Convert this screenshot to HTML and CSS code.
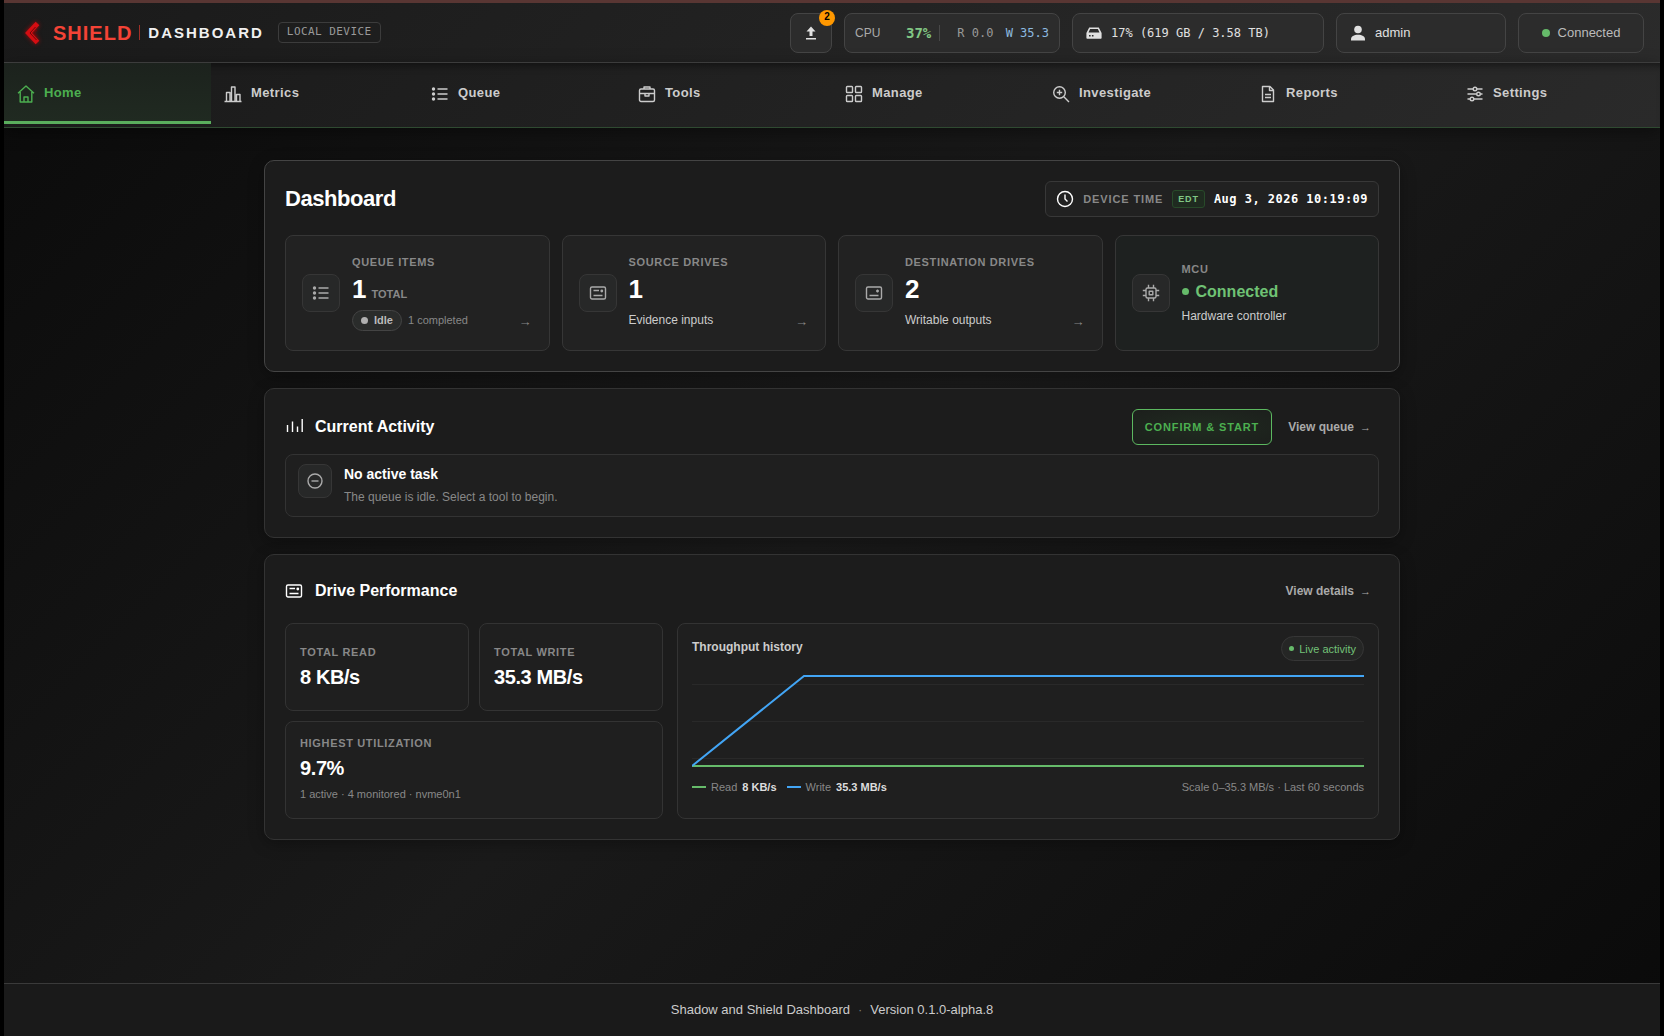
FILE: index.html
```html
<!DOCTYPE html>
<html lang="en">
<head>
<meta charset="utf-8">
<meta name="viewport" content="width=device-width, initial-scale=1">
<title>Shadow and Shield Dashboard</title>
<link rel="stylesheet" href="styles.css">
</head>
<body>
<svg class="sprite" aria-hidden="true">
  <symbol id="i-list" viewBox="0 0 18 18"><path d="M6.5 4h10M6.5 9h10M6.5 14h10"/><g fill="currentColor" stroke="none"><circle cx="2.500" cy="4" r="1.700"/><circle cx="2.500" cy="9" r="1.700"/><circle cx="2.500" cy="14" r="1.700"/></g></symbol>
  <symbol id="i-source" viewBox="0 0 18 18"><rect x="1.500" y="3" width="15" height="12" rx="1.500"/><path d="M4.500 6.500h5.500M4.500 11.500h9"/><circle cx="12.800" cy="7" r="1.400" fill="currentColor" stroke="none"/></symbol>
  <symbol id="i-dest" viewBox="0 0 18 18"><rect x="1.500" y="3" width="15" height="12" rx="1.500"/><path d="M4.500 11.500h9M12.500 5.500v3M11 7h3"/></symbol>
</svg>
<div class="app">
  <header class="topbar">
    <div class="brand">
      <svg class="logo" viewBox="0 0 20 28" aria-hidden="true"><path d="M15.500 4.500 6.500 14l9 9.500" fill="none" stroke="#d50d12" stroke-width="5"/><path d="M13.500 8 8 14l6.500 7M15 11l-3 3 3 3.500" fill="none" stroke="#6d0508" stroke-width="1"/></svg>
      <span class="brand-name">SHIELD</span>
      <span class="brand-rule"></span>
      <span class="brand-sub">DASHBOARD</span>
      <span class="tag">LOCAL DEVICE</span>
    </div>
    <div class="tools">
      <button class="chip chip-upload" type="button" aria-label="Uploads">
        <svg class="ico16" viewBox="0 0 16 16" aria-hidden="true"><path d="M8 1.500 12.500 6.500h-3V11h-3V6.500h-3zM3 13h10v1.500H3z" fill="currentColor"/></svg>
        <span class="count">2</span>
      </button>
      <div class="chip chip-cpu">
        <span class="cpu-label">CPU</span><span class="cpu-value">37%</span><span class="cpu-rule"></span>
        <span class="cpu-read">R 0.0</span><span class="cpu-write">W 35.3</span>
      </div>
      <div class="chip chip-disk">
        <svg class="ico16" viewBox="0 0 16 16" aria-hidden="true"><path fill="currentColor" fill-rule="evenodd" d="M3.200 2.500h9.600L15.600 8v5q0 .8-.8.8H1.200q-.8 0-.8-.8V8zM4.100 4 2.500 7.500h11L11.900 4zM3 9.900v1.700h1.600V9.900zm2.900 0v1.700h1.600V9.900z"/></svg>
        <span>17% (619 GB / 3.58 TB)</span>
      </div>
      <button class="chip chip-user" type="button">
        <svg class="ico16" viewBox="0 0 16 16" aria-hidden="true"><g fill="currentColor"><circle cx="8" cy="4.500" r="3.800"/><path d="M1 15.500v-1.300C1 11.500 4 9.800 8 9.800s7 1.700 7 4.400v1.300z"/></g></svg>
        <span>admin</span>
      </button>
      <div class="chip chip-status"><span class="dot dot-8"></span><span>Connected</span></div>
    </div>
  </header>

  <nav class="nav" aria-label="Main">
    <a class="nav-item active" href="#"><svg class="line" viewBox="0 0 18 18"><path d="M1 8.200 9 1l8 7.200M3.200 7v10h11.600V7M7 17v-5h4v5"/></svg><span>Home</span></a>
    <a class="nav-item" href="#"><svg class="line" viewBox="0 0 18 18"><path d="M.500 16.500h17M2.500 16V7.500h3.500V16M7.500 16V2H11v14M12.500 16V9.500H16V16"/></svg><span>Metrics</span></a>
    <a class="nav-item" href="#"><svg class="line"><use href="#i-list"/></svg><span>Queue</span></a>
    <a class="nav-item" href="#"><svg class="line" viewBox="0 0 18 18"><rect x="1.500" y="4" width="15" height="12.500" rx="1.500"/><path d="M6 4V2h6v2M1.500 8.500h15M7 8.500h4V11H7z"/></svg><span>Tools</span></a>
    <a class="nav-item" href="#"><svg class="line" viewBox="0 0 18 18"><rect x="1.500" y="1.500" width="6" height="6" rx=".8"/><rect x="10.500" y="1.500" width="6" height="6" rx=".8"/><rect x="1.500" y="10.500" width="6" height="6" rx=".8"/><rect x="10.500" y="10.500" width="6" height="6" rx=".8"/></svg><span>Manage</span></a>
    <a class="nav-item" href="#"><svg class="line" viewBox="0 0 18 18"><circle cx="7.500" cy="7.500" r="5.800"/><path d="m11.800 11.800 5.200 5.200M7.500 4.800v5.400M4.800 7.500h5.400"/></svg><span>Investigate</span></a>
    <a class="nav-item" href="#"><svg class="line" viewBox="0 0 18 18"><path d="M3.500 1.500h7.500l3.500 3.500v11.500h-11zM10.500 1.500V5.500h4M6 9.500h6M6 12.500h6"/></svg><span>Reports</span></a>
    <a class="nav-item" href="#"><svg class="line" viewBox="0 0 18 18"><path d="M1.500 4h5.500M11 4h5.500M1.500 9H10.500M14.500 9h2M1.500 14H4M8 14h8.500"/><circle cx="9" cy="4" r="1.800"/><circle cx="12.500" cy="9" r="1.800"/><circle cx="6" cy="14" r="1.800"/></svg><span>Settings</span></a>
  </nav>

  <main class="main">
    <section class="panel panel-top">
      <div class="panel-head">
        <h1>Dashboard</h1>
        <div class="clock">
          <svg class="line" viewBox="0 0 18 18"><circle cx="9" cy="9" r="7.500"/><path d="M9 4.500V9l2.500 2.500"/></svg>
          <span class="label label-wide">DEVICE TIME</span>
          <span class="zone">EDT</span>
          <time datetime="2026-08-03T10:19:09">Aug 3, 2026 10:19:09</time>
        </div>
      </div>
      <div class="stats">
        <a class="stat" href="#">
          <span class="tile"><svg class="line"><use href="#i-list"/></svg></span>
          <span class="stat-body">
            <span class="label">QUEUE ITEMS</span>
            <span class="big">1<small>TOTAL</small></span>
            <span class="stat-foot"><span class="pill"><span class="dot dot-grey"></span>Idle</span><span class="muted">1 completed</span><span class="arrow">→</span></span>
          </span>
        </a>
        <a class="stat" href="#">
          <span class="tile"><svg class="line"><use href="#i-source"/></svg></span>
          <span class="stat-body">
            <span class="label">SOURCE DRIVES</span>
            <span class="big">1</span>
            <span class="stat-foot">Evidence inputs<span class="arrow">→</span></span>
          </span>
        </a>
        <a class="stat" href="#">
          <span class="tile"><svg class="line"><use href="#i-dest"/></svg></span>
          <span class="stat-body">
            <span class="label">DESTINATION DRIVES</span>
            <span class="big">2</span>
            <span class="stat-foot">Writable outputs<span class="arrow">→</span></span>
          </span>
        </a>
        <div class="stat stat-ok">
          <span class="tile"><svg class="line" viewBox="0 0 18 18"><rect x="4" y="4" width="10" height="10" rx="1.500"/><rect x="7.200" y="7.200" width="3.600" height="3.600"/><path d="M6.500 4V.800M11.500 4V.800M6.500 17.200V14M11.500 17.200V14M.800 6.500H4M.800 11.500H4M14 6.500h3.200M14 11.500h3.200"/></svg></span>
          <span class="stat-body">
            <span class="label">MCU</span>
            <span class="state"><span class="dot"></span>Connected</span>
            <span class="state-note">Hardware controller</span>
          </span>
        </div>
      </div>
    </section>

    <section class="panel">
      <div class="panel-head head-activity">
        <h2><svg class="line" viewBox="0 0 18 18"><path d="M2.500 14V7M7.500 14V3.500M12.500 14V8.500M17.200 14V1"/></svg>Current Activity</h2>
        <div class="actions">
          <button class="confirm" type="button">CONFIRM &amp; START</button>
          <a class="more" href="#">View queue <span>→</span></a>
        </div>
      </div>
      <div class="task">
        <span class="tile tile-sm"><svg class="line" viewBox="0 0 18 18"><circle cx="9" cy="9" r="7"/><path d="M5.500 9h7"/></svg></span>
        <div>
          <h3>No active task</h3>
          <p>The queue is idle. Select a tool to begin.</p>
        </div>
      </div>
    </section>

    <section class="panel">
      <div class="panel-head head-drive">
        <h2><svg class="line"><use href="#i-source"/></svg>Drive Performance</h2>
        <a class="more" href="#">View details <span>→</span></a>
      </div>
      <div class="perf">
        <div class="metrics">
          <div class="metric"><span class="label">TOTAL READ</span><strong>8 KB/s</strong></div>
          <div class="metric"><span class="label">TOTAL WRITE</span><strong>35.3 MB/s</strong></div>
          <div class="metric metric-wide"><span class="label">HIGHEST UTILIZATION</span><strong>9.7%</strong><span class="muted">1 active · 4 monitored · nvme0n1</span></div>
        </div>
        <div class="chart">
          <div class="chart-head"><h3>Throughput history</h3><span class="live"><span class="dot dot-5"></span>Live activity</span></div>
          <svg class="plot" viewBox="0 0 600 112" preserveAspectRatio="none" role="img" aria-label="Read and write throughput">
            <path d="M0 19.500h600M0 56.500h600M0 93.500h600" stroke="#292929"/>
            <path d="M0 101h600" stroke="#66bb6a" stroke-width="2"/>
            <path d="M0 101 100 11h500" stroke="#42a5f5" stroke-width="2"/>
          </svg>
          <div class="legend">
            <span class="key key-read"></span><span>Read</span><b>8 KB/s</b>
            <span class="key key-write"></span><span>Write</span><b>35.3 MB/s</b>
            <span class="scale">Scale 0–35.3 MB/s · Last 60 seconds</span>
          </div>
        </div>
      </div>
    </section>
  </main>

  <footer class="footer"><span>Shadow and Shield Dashboard</span><span class="sep">·</span><span>Version 0.1.0-alpha.8</span></footer>
</div>
</body>
</html>
```
FILE: styles.css
```css
* { box-sizing: border-box; }

body {
  margin: 0;
  background: #000;
  color: #fff;
  font: 13px/16px "Liberation Sans", Arial, sans-serif;
}

a { color: inherit; text-decoration: none; }
button { font: inherit; color: inherit; cursor: pointer; }
h1, h2, h3, p { margin: 0; }

.sprite { display: none; }

.app {
  display: flex;
  flex-direction: column;
  min-height: 100vh;
  margin: 0 4px;
  border-top: 3px solid #593633;
  background: linear-gradient(135deg, #0a0a0a 0%, #1a1a1a 50%, #0a0a0a 100%);
}

.line {
  flex: none;
  width: 18px;
  height: 18px;
  fill: none;
  stroke: currentColor;
  stroke-width: 1.4;
  stroke-linejoin: round;
}
.ico16 { flex: none; width: 16px; height: 16px; }

.dot {
  flex: none;
  width: 7px;
  height: 7px;
  border-radius: 50%;
  background: #66bb6a;
}
.dot-8 { width: 8px; height: 8px; }
.dot-5 { width: 5px; height: 5px; }
.dot-grey { background: #b0b0b0; }

/* Top bar */
.topbar {
  display: flex;
  align-items: center;
  justify-content: space-between;
  height: 60px;
  padding: 0 16px 0 18px;
  border-bottom: 1px solid #444;
  background: linear-gradient(135deg, #1a1a1a, #2b2b2b);
}
.brand { display: flex; align-items: center; }
.logo { width: 20px; height: 28px; filter: drop-shadow(0 0 2px rgba(255, 0, 0, .6)); }
.brand-name {
  margin-left: 11px;
  color: #f44336;
  font-size: 20px;
  font-weight: 700;
  letter-spacing: 1px;
}
.brand-rule { width: 1px; height: 15px; margin: 0 8px 0 7px; background: #a03028; }
.brand-sub { font-size: 15px; font-weight: 700; letter-spacing: 2px; color: #f0f0f0; }
.tag {
  margin-left: 14px;
  padding: 2px 8px 3px;
  border: 1px solid #3c3c3c;
  border-radius: 4px;
  color: #999;
  font: 11px/14px "DejaVu Sans Mono", monospace;
  letter-spacing: .04em;
}
.tools { display: flex; gap: 12px; }
.chip {
  display: flex;
  align-items: center;
  height: 40px;
  padding: 0 13px;
  border: 1px solid #444;
  border-radius: 8px;
  background: #2c2c2c;
  color: #e0e0e0;
}
.chip-upload { position: relative; width: 42px; justify-content: center; padding: 0; }
.count {
  position: absolute;
  top: -4px;
  right: -4px;
  width: 16px;
  height: 16px;
  border-radius: 50%;
  background: #ff9800;
  color: #000;
  font-size: 10px;
  font-weight: 700;
  line-height: 14px;
  text-align: center;
}
.chip-cpu { width: 216px; padding: 0 10px; font: 12px/16px "DejaVu Sans Mono", monospace; }
.cpu-label { width: 51px; color: #aaa; font-family: "Liberation Sans", Arial, sans-serif; }
.cpu-value { color: #81c784; font-size: 14px; font-weight: 700; }
.cpu-rule { width: 1px; height: 16px; margin: 0 17px 0 8px; background: #484848; }
.cpu-read { color: #999; }
.cpu-write { margin-left: auto; color: #8ebbe0; }
.chip-disk { gap: 9px; width: 252px; font: 12px/16px "DejaVu Sans Mono", monospace; }
.chip-user { gap: 9px; width: 170px; }
.chip-status { gap: 8px; width: 126px; justify-content: center; color: #bbb; }

/* Navigation */
.nav {
  display: grid;
  grid-template-columns: repeat(8, 1fr);
  padding-bottom: 3px;
  border-bottom: 1px solid #2f4a31;
  background: linear-gradient(135deg, #1a1a1a, #2a2a2a);
  box-shadow: inset 0 8px 8px -6px rgba(0, 0, 0, .5), 0 4px 16px rgba(0, 0, 0, .4);
}
.nav-item {
  display: flex;
  align-items: center;
  gap: 9px;
  height: 61px;
  padding: 3px 13px 0;
  border-bottom: 3px solid transparent;
  color: #ccc;
  font-weight: 700;
  letter-spacing: .03em;
}
.nav-item span { padding-bottom: 2px; }
.nav-item.active {
  border-bottom-color: #5aae5d;
  background: linear-gradient(180deg, #1c221d, #202a21);
  color: #4caf50;
}

/* Panels */
.main {
  display: flex;
  flex: 1;
  flex-direction: column;
  gap: 16px;
  width: 100%;
  max-width: 1136px;
  margin: 0 auto;
  padding: 32px 0;
}
.panel {
  padding: 20px;
  border: 1px solid #333;
  border-radius: 10px;
  background: #1c1c1c;
  box-shadow: 0 4px 16px rgba(0, 0, 0, .3);
}
.panel-top { border-color: #444; }
.panel-head {
  display: flex;
  align-items: center;
  justify-content: space-between;
  margin-bottom: 18px;
}
h1 { font-size: 22px; line-height: 28px; letter-spacing: -.02em; }
h2 { display: flex; align-items: center; gap: 12px; font-size: 16px; line-height: 20px; }
h3 { font-size: 14px; line-height: 20px; }

.label {
  color: #888;
  font-size: 11px;
  font-weight: 700;
  line-height: 14px;
  letter-spacing: .06em;
}
.label-wide { letter-spacing: .08em; }
.muted { color: #888; font-size: 11px; line-height: 14px; }

.clock {
  display: flex;
  align-items: center;
  gap: 9px;
  height: 36px;
  padding: 0 10px;
  border: 1px solid #383838;
  border-radius: 6px;
  background: #212121;
}
.clock time { font: 700 12px/16px "DejaVu Sans Mono", monospace; letter-spacing: .04em; }
.zone {
  padding: 1px 5px;
  border: 1px solid #284a2a;
  border-radius: 3px;
  background: #1f2b20;
  color: #81c784;
  font-size: 9px;
  font-weight: 700;
  line-height: 14px;
  letter-spacing: .1em;
}

.stats { display: grid; grid-template-columns: repeat(4, 1fr); gap: 12px; }
.stat {
  display: flex;
  align-items: center;
  gap: 12px;
  height: 116px;
  padding: 0 16px;
  border: 1px solid #363636;
  border-radius: 8px;
  background: #222;
}
.stat-ok { background: #1e2120; }
.tile {
  display: flex;
  flex: none;
  align-items: center;
  justify-content: center;
  width: 38px;
  height: 38px;
  border: 1px solid #363636;
  border-radius: 8px;
  background: #272828;
  color: #aaa;
}
.tile-sm { width: 34px; height: 34px; }
.stat-body { display: flex; flex: 1; flex-direction: column; }
.big {
  display: flex;
  align-items: baseline;
  gap: 5px;
  height: 32px;
  margin-top: 4px;
  font-size: 26px;
  font-weight: 700;
  line-height: 32px;
}
.big small { color: #888; font-size: 11px; line-height: 14px; }
.stat-foot {
  display: flex;
  align-items: center;
  gap: 6px;
  height: 22px;
  margin-top: 4px;
  color: #ccc;
  font-size: 12px;
}
.arrow { margin-left: auto; padding: 3px 1px 0 0; color: #888; font-size: 13px; line-height: 18px; }
.pill {
  display: flex;
  align-items: center;
  gap: 6px;
  height: 21px;
  padding: 0 8px;
  border: 1px solid #444;
  border-radius: 11px;
  background: #2a2c2b;
  color: #bbb;
  font-size: 11px;
  font-weight: 700;
}
.state {
  display: flex;
  align-items: center;
  gap: 7px;
  margin-top: 6px;
  color: #6fc274;
  font-size: 16px;
  font-weight: 700;
  line-height: 20px;
}
.state-note { margin: 6px 0 1px; color: #ccc; font-size: 12px; }

/* Current activity */
.head-activity { margin-bottom: 9px; }
.actions { display: flex; align-items: center; gap: 8px; }
.confirm {
  height: 36px;
  padding: 0 12px;
  border: 1px solid #5cb860;
  border-radius: 6px;
  background: radial-gradient(#202b20, #1c1f1c);
  color: #4caf50;
  font-size: 11px;
  font-weight: 700;
  letter-spacing: .08em;
}
.more {
  display: flex;
  gap: 6px;
  padding: 8px;
  color: #aaa;
  font-size: 12px;
  font-weight: 700;
  line-height: 16px;
}
.more span { font-size: 11px; }
.task {
  display: flex;
  gap: 12px;
  padding: 9px 12px 10px;
  border: 1px solid #333;
  border-radius: 8px;
  background: #1f1f1f;
}
.task p { margin-top: 4px; color: #888; font-size: 12px; line-height: 18px; }

/* Drive performance */
.head-drive { margin-bottom: 16px; }
.perf { display: grid; grid-template-columns: 7fr 13fr; gap: 14px; }
.metrics { display: grid; grid-template-columns: 1fr 1fr; grid-template-rows: 88px 98px; gap: 10px; }
.metric, .chart {
  border: 1px solid #333;
  border-radius: 8px;
  background: #1f1f1f;
}
.metric { display: flex; flex-direction: column; justify-content: center; padding: 0 14px; }
.metric-wide { grid-column: span 2; padding-bottom: 3px; }
.metric strong { margin-top: 6px; font-size: 20px; line-height: 24px; letter-spacing: -.02em; }
.metric .muted { margin-top: 7px; }
.chart { display: flex; flex-direction: column; padding: 12px 14px; }
.chart-head { display: flex; justify-content: space-between; }
.chart-head h3 { color: #ccc; font-size: 12px; line-height: 22px; }
.live {
  display: flex;
  align-items: center;
  gap: 5px;
  height: 25px;
  padding: 0 7px;
  border: 1px solid #363636;
  border-radius: 13px;
  background: #252625;
  color: #73c278;
  font-size: 11px;
}
.plot { display: block; width: 100%; height: 112px; margin-top: 4px; fill: none; }
.plot path { vector-effect: non-scaling-stroke; }
.legend { display: flex; align-items: center; gap: 5px; margin-top: 3px; color: #888; font-size: 11px; line-height: 14px; }
.legend b { color: #ddd; }
.key { width: 14px; height: 2px; background: #66bb6a; }
.key-write { margin-left: 5px; background: #42a5f5; }
.scale { margin-left: auto; }

.footer {
  display: flex;
  justify-content: center;
  gap: 8px;
  padding: 18px 0;
  border-top: 1px solid #3a3a3a;
  background: #1a1a1a;
  color: #ccc;
}
.sep { color: #777; }
```
